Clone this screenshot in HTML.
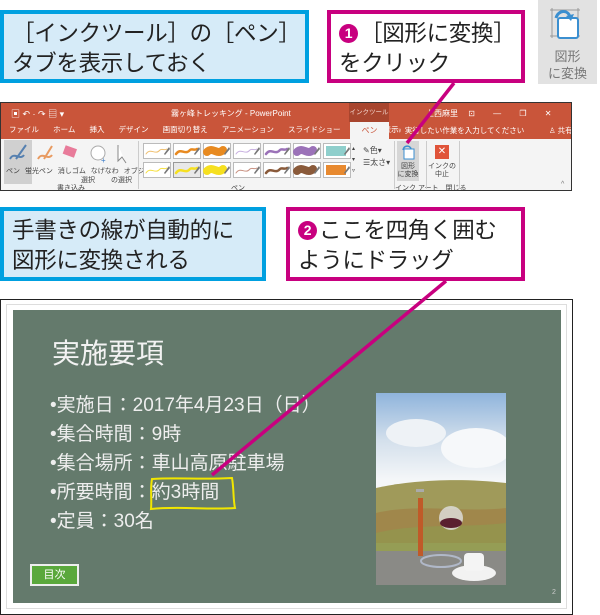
<!DOCTYPE html>
<html><head><meta charset="utf-8"><style>
*{margin:0;padding:0;box-sizing:border-box}
body{width:600px;height:615px;background:#fff;position:relative;overflow:hidden;font-family:"Liberation Sans","Noto Sans CJK JP",sans-serif;color:#222}
.abs{position:absolute}
.bb{border:4px solid #00a0e0;background:#d6ebf8}
.mb{border:4px solid #c8007f;background:#fff}
.call{font-size:22.5px;line-height:30px;padding:5px 0 0 8px;white-space:nowrap;letter-spacing:-0.3px}
.num{display:inline-block;width:19px;height:19px;border-radius:50%;background:#c8007f;color:#fff;font-size:14px;line-height:19px;text-align:center;font-weight:bold;vertical-align:3px;margin-right:2px}
.lbl{font-size:7px;color:#444;position:absolute;text-align:center}
.bul{position:absolute;left:50px;color:#eee;font-size:19px;line-height:20px;white-space:nowrap}
</style></head><body>

<div class="abs bb call" style="left:0;top:10px;width:309px;height:73px">［インクツール］の［ペン］<br>タブを表示しておく</div>
<div class="abs mb call" style="left:327px;top:10px;width:198px;height:73px"><span class="num">1</span>［図形に変換］<br>をクリック</div>

<div class="abs" style="left:538px;top:0;width:59px;height:84px;background:#e2e2e2">
<svg class="abs" style="left:8px;top:4px" width="40" height="38" viewBox="0 0 40 38">
<path d="M4 6H34M6 4V34M4 32H34M32 4V34" stroke="#999" stroke-width="1" fill="none"/>
<rect x="12" y="14" width="20" height="20" rx="2" fill="#fff" stroke="#3b8fd0" stroke-width="2"/>
<path d="M10 14C12 6 22 5 24 13" stroke="#3b8fd0" stroke-width="3" fill="none"/>
<path d="M20 12L25 17L28 10Z" fill="#3b8fd0"/>
</svg>
<div class="abs" style="left:0;top:48px;width:59px;text-align:center;font-size:13px;line-height:17px;color:#777">図形<br>に変換</div>
</div>

<!-- ribbon -->
<div class="abs" style="left:0;top:102px;width:572px;height:89px;border:1px solid #333;background:#f4f4f4;overflow:hidden">
<div class="abs" style="left:0;top:0;width:572px;height:36px;background:#c9553a"></div>
<div class="abs" style="left:348px;top:0;width:40px;height:19px;background:#a8452e;color:#f3d7cf;font-size:6.5px;line-height:19px;text-align:center;white-space:nowrap">インクツール</div>
<div class="abs" style="left:10px;top:4px;color:#fff;font-size:9px">▣ ↶ · ↷ ▤ ▾</div>
<div class="abs" style="left:170px;top:5px;color:#fff;font-size:8px">霧ヶ峰トレッキング - PowerPoint</div>
<div class="abs" style="left:425px;top:5px;color:#fff;font-size:8px;white-space:nowrap">上西麻里　 ⊡　　 —　　 ❐　　 ✕</div>
<div class="abs" style="left:0;top:21px;color:#fff;font-size:7.5px;white-space:nowrap;word-spacing:12px;padding-left:8px">ファイル ホーム 挿入 デザイン 画面切り替え アニメーション スライドショー 校閲 表示</div>
<div class="abs" style="left:349px;top:19px;width:39px;height:18px;background:#f4f4f4;color:#c9553a;font-size:8px;text-align:center;line-height:18px">ペン</div>
<div class="abs" style="left:396px;top:22px;color:#fff;font-size:7.5px;white-space:nowrap">♀ 実行したい作業を入力してください　　　 ♙ 共有　 ▭</div>
<div class="abs" style="left:3px;top:37px;width:28px;height:44px;background:#d0d0d0"></div>
<svg class="abs" style="left:5px;top:40px" width="130" height="22" viewBox="0 0 130 22">
<path d="M4 16C8 8 14 18 18 12M10 16L20 2" stroke="#5580b0" stroke-width="2" fill="none"/>
<path d="M32 16C36 8 42 18 46 12M38 16L46 3" stroke="#e89a60" stroke-width="2" fill="none"/>
<rect x="58" y="4" width="12" height="9" fill="#e87b9a" transform="rotate(20 64 8)"/>
<circle cx="92" cy="10" r="7" fill="#fff" stroke="#aaa"/><text x="95" y="20" font-size="8" fill="#3a7bc8">+</text>
<path d="M112 2V18L116 14L120 20" stroke="#888" fill="#fff"/>
</svg>
<div class="lbl" style="left:0;top:63px;width:135px;text-align:left;white-space:nowrap;word-spacing:3px">&nbsp;ペン 蛍光ペン 消しゴム なげなわ オブジェクト</div>
<div class="lbl" style="left:80px;top:72px;white-space:nowrap;word-spacing:14px">選択 の選択</div>
<div class="lbl" style="left:50px;top:80px;width:40px">書き込み</div>
<div class="abs" style="left:137px;top:38px;width:1px;height:48px;background:#ccc"></div>
<svg class="abs" style="left:142px;top:40px" width="215" height="36" viewBox="0 0 215 36">
<g stroke="#bbb" fill="#fff">
<rect x=".5" y=".5" width="27" height="15"/><rect x="30.5" y=".5" width="27" height="15"/><rect x="60.5" y=".5" width="27" height="15"/><rect x="90.5" y=".5" width="27" height="15"/><rect x="120.5" y=".5" width="27" height="15"/><rect x="150.5" y=".5" width="27" height="15"/><rect x="180.5" y=".5" width="27" height="15"/>
<rect x=".5" y="19.5" width="27" height="15"/><rect x="30.5" y="19.5" width="27" height="15" stroke="#999" fill="#e8e8e8"/><rect x="60.5" y="19.5" width="27" height="15"/><rect x="90.5" y="19.5" width="27" height="15"/><rect x="120.5" y="19.5" width="27" height="15"/><rect x="150.5" y="19.5" width="27" height="15"/><rect x="180.5" y="19.5" width="27" height="15"/>
</g>
<g fill="none" stroke-linecap="round">
<path d="M3 11C8 4 12 13 17 7C19 5 21 8 24 6" stroke="#f0c070" stroke-width="1"/>
<path d="M33 11C38 4 42 13 47 7C49 5 51 8 54 6" stroke="#e88a20" stroke-width="2.5"/>
<path d="M64 9C70 3 74 13 80 7" stroke="#e88a20" stroke-width="8"/>
<path d="M93 11C98 4 102 13 107 7C109 5 111 8 114 6" stroke="#c8b0e0" stroke-width="1"/>
<path d="M123 11C128 4 132 13 137 7C139 5 141 8 144 6" stroke="#9b72b8" stroke-width="2.5"/>
<path d="M154 9C160 3 164 13 170 7" stroke="#9b72b8" stroke-width="8"/>
<rect x="183" y="3" width="20" height="10" fill="#8fcfcc" stroke="none"/>
<path d="M3 30C8 23 12 32 17 26C19 24 21 27 24 25" stroke="#f6e040" stroke-width="1"/>
<path d="M33 30C38 23 42 32 47 26C49 24 51 27 54 25" stroke="#f6e020" stroke-width="2.5"/>
<path d="M64 28C70 22 74 32 80 26" stroke="#f6e020" stroke-width="8"/>
<path d="M93 30C98 23 102 32 107 26C109 24 111 27 114 25" stroke="#c89080" stroke-width="1"/>
<path d="M123 30C128 23 132 32 137 26C139 24 141 27 144 25" stroke="#8a5a3a" stroke-width="2.5"/>
<path d="M154 28C160 22 164 32 170 26" stroke="#8a5a3a" stroke-width="8"/>
<rect x="183" y="22" width="20" height="10" fill="#e88a30" stroke="none"/>
</g>
<g fill="#777"><path d="M21 11L26 4L27 6L22 12Z"/><path d="M51 11L56 4L57 6L52 12Z"/><path d="M81 11L86 4L87 6L82 12Z"/><path d="M111 11L116 4L117 6L112 12Z"/><path d="M141 11L146 4L147 6L142 12Z"/><path d="M171 11L176 4L177 6L172 12Z"/><path d="M201 11L206 4L207 6L202 12Z"/>
<path d="M21 30L26 23L27 25L22 31Z"/><path d="M51 30L56 23L57 25L52 31Z"/><path d="M81 30L86 23L87 25L82 31Z"/><path d="M111 30L116 23L117 25L112 31Z"/><path d="M141 30L146 23L147 25L142 31Z"/><path d="M171 30L176 23L177 25L172 31Z"/><path d="M201 30L206 23L207 25L202 31Z"/></g>
</svg>
<div class="lbl" style="left:351px;top:41px;white-space:nowrap;font-size:6px;line-height:11px">▴<br>▾<br>▿</div>
<div class="lbl" style="left:362px;top:42px;white-space:nowrap;font-size:8px;text-align:left;line-height:12px">✎色▾<br>☰太さ▾</div>
<div class="lbl" style="left:230px;top:80px">ペン</div>
<div class="abs" style="left:393px;top:38px;width:1px;height:48px;background:#ccc"></div>
<div class="abs" style="left:396px;top:38px;width:22px;height:40px;background:#d6d6d6"></div>
<svg class="abs" style="left:398px;top:40px" width="18" height="18" viewBox="0 0 18 18"><rect x="5" y="6" width="10" height="10" fill="#fff" stroke="#3b8fd0"/><path d="M4 7C5 2 11 2 12 6" stroke="#3b8fd0" stroke-width="1.5" fill="none"/></svg>
<div class="lbl" style="left:396px;top:60px;width:22px;line-height:8px">図形<br>に変換</div>
<div class="abs" style="left:434px;top:42px;width:14px;height:14px;background:#e0543a;color:#fff;font-size:10px;text-align:center;line-height:14px">✕</div>
<div class="lbl" style="left:426px;top:60px;width:30px;line-height:8px;white-space:nowrap">インクの<br>中止</div>
<div class="lbl" style="left:394px;top:80px;white-space:nowrap">インク アート　閉じる</div>
<div class="abs" style="left:425px;top:38px;width:1px;height:48px;background:#ccc"></div>
<div class="abs" style="left:458px;top:38px;width:1px;height:48px;background:#ccc"></div>
<div class="abs" style="left:560px;top:78px;font-size:7px;color:#777">^</div>
</div>

<div class="abs bb call" style="left:0;top:207px;width:266px;height:74px">手書きの線が自動的に<br>図形に変換される</div>
<div class="abs mb call" style="left:286px;top:207px;width:239px;height:74px"><span class="num">2</span>ここを四角く囲む<br>ようにドラッグ</div>

<!-- slide -->
<div class="abs" style="left:0;top:299px;width:573px;height:316px;border:1px solid #222;background:#fff"></div>
<div class="abs" style="left:6px;top:304px;width:561px;height:305px;border:1px solid #ddd"></div>
<div class="abs" style="left:13px;top:310px;width:548px;height:293px;background:#647a6c"></div>
<div class="abs" style="left:52px;top:338px;color:#f2f2f2;font-size:28px;line-height:32px">実施要項</div>
<div class="bul" style="top:396px">•実施日：2017年4月23日（日）</div>
<div class="bul" style="top:425px">•集合時間：9時</div>
<div class="bul" style="top:454px">•集合場所：車山高原駐車場</div>
<div class="bul" style="top:483px">•所要時間：約3時間</div>
<div class="bul" style="top:512px">•定員：30名</div>
<svg class="abs" style="left:148px;top:475px" width="90" height="38" viewBox="0 0 90 38"><path d="M4 4C30 2 50 5 84 3C86 14 85 24 87 33C60 35 30 31 3 34C4 24 2 14 4 4Z" stroke="#f2e600" stroke-width="2" fill="none"/></svg>
<svg class="abs" style="left:376px;top:393px" width="130" height="192" viewBox="0 0 130 192">
<defs><linearGradient id="sk" x1="0" y1="0" x2="0" y2="1"><stop offset="0" stop-color="#8fb4dc"/><stop offset="0.25" stop-color="#d4e0ec"/><stop offset="0.45" stop-color="#f4f6f8"/></linearGradient></defs>
<rect width="130" height="192" fill="url(#sk)"/>
<ellipse cx="40" cy="40" rx="30" ry="14" fill="#eef2f6"/>
<ellipse cx="100" cy="55" rx="35" ry="20" fill="#f6f8fa"/>
<path d="M0 95C30 88 80 84 130 90V192H0Z" fill="#a09a5a"/>
<path d="M0 120C40 110 90 120 130 115V150H0Z" fill="#a0703a" opacity=".45"/>
<path d="M0 140C40 130 90 135 130 130V160H0Z" fill="#8aa050" opacity=".5"/>
<rect x="0" y="158" width="130" height="34" fill="#8a8a86"/>
<rect x="40" y="96" width="8" height="3" fill="#aaa"/>
<rect x="42" y="105" width="5" height="58" fill="#c05a28"/>
<circle cx="75" cy="125" r="12" fill="#e0e0e0" opacity=".8"/><ellipse cx="75" cy="130" rx="11" ry="5" fill="#5a2030"/>
<ellipse cx="65" cy="168" rx="20" ry="6" fill="none" stroke="#b0b8c8" stroke-width="2"/>
<ellipse cx="98" cy="180" rx="22" ry="8" fill="#f2f2f2"/><rect x="88" y="160" width="20" height="18" rx="4" fill="#f4f4f4"/>
</svg>
<div class="abs" style="left:30px;top:564px;width:49px;height:22px;background:#5aa83c;border:2px solid #eee;color:#fff;font-size:11px;text-align:center;line-height:18px">目次</div>
<div class="abs" style="left:552px;top:589px;color:#ccc;font-size:7px">2</div>

<svg class="abs" style="left:0;top:0" width="600" height="615"><path d="M454 83L407 143" stroke="#c8007f" stroke-width="3.5"/><path d="M446 281L212 475" stroke="#c8007f" stroke-width="3.5"/></svg>
</body></html>
